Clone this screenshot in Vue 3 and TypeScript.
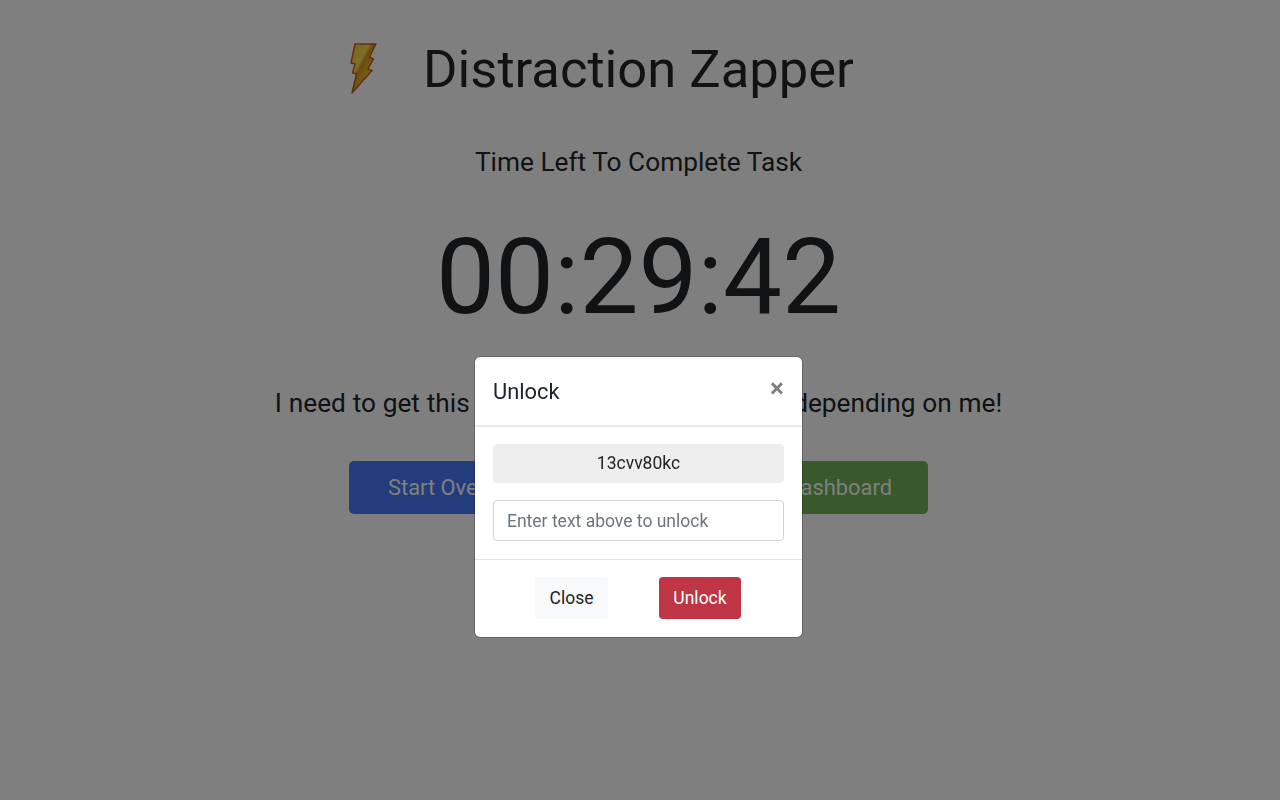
<script setup lang="ts">
const title = 'Distraction Zapper'
const time = '00:29:42'
</script>

<template>
  <div class="page">
    <header class="brand">
      <svg class="bolt" viewBox="0 0 30 54" width="30" height="54" aria-hidden="true">
        <defs>
          <linearGradient id="boltFill" x1="0.1" y1="0.05" x2="0.75" y2="0.75">
            <stop offset="0" stop-color="#f4cc48" />
            <stop offset="0.42" stop-color="#ffdc50" />
            <stop offset="0.52" stop-color="#d8961c" />
            <stop offset="0.75" stop-color="#e8b028" />
            <stop offset="1" stop-color="#ffd040" />
          </linearGradient>
        </defs>
        <path
          d="M6 1 L27 1 L20.5 14 L24.5 16 L19 26 L23 27.5 L3 50 L7.5 31 L3.5 30 L6 21 L2 20 Z"
          fill="url(#boltFill)"
          stroke="#c8601c"
          stroke-width="1.5"
          stroke-linejoin="round"
        />
      </svg>
      <h1 class="title">{{ title }}</h1>
      <span></span>
    </header>
    <p class="subtitle">Time Left To Complete Task</p>
    <div class="timer">{{ time }}</div>
    <p class="goal">I need to get this report finished, my team is depending on me!</p>
    <div class="actions">
      <button class="btn-lg blue">Start Over</button>
      <button class="btn-lg green">Back To Dashboard</button>
    </div>
  </div>

  <div class="backdrop">
    <div class="modal">
      <div class="modal-header">
        <h5 class="modal-title">Unlock</h5>
        <span class="close">×</span>
      </div>
      <div class="modal-body">
        <div class="code">13cvv80kc</div>
        <input class="field" type="text" placeholder="Enter text above to unlock" />
      </div>
      <div class="modal-footer">
        <button class="btn light">Close</button>
        <button class="btn danger">Unlock</button>
      </div>
    </div>
  </div>
</template>

<style>
html, body { margin: 0; background: #fff; }
</style>

<style scoped>
.page {
  box-sizing: border-box;
  width: 1277px;
  height: 800px;
  padding-top: 36px;
  font-family: Roboto, sans-serif;
  color: #212529;
  text-align: center;
}
.brand {
  display: grid;
  grid-template-columns: 1fr auto 1fr;
  align-items: center;
}
.bolt { justify-self: end; margin-right: 44px; }
.title { margin: 0; font-size: 52.5px; font-weight: 400; line-height: 67px; }
.subtitle { margin: 40px 0 0; font-size: 26.25px; line-height: 38px; }
.timer { margin-top: 22px; font-size: 105px; font-weight: 400; line-height: 150px; }
.goal { margin: 32px 0 0; font-size: 26.25px; line-height: 36px; word-spacing: 0.25px; }
.actions {
  display: flex;
  justify-content: space-between;
  width: 579px;
  margin: 40px auto 0;
}
.btn-lg {
  height: 53px;
  padding: 0 36px;
  border: 0;
  border-radius: 5px;
  font: 400 21.875px Roboto, sans-serif;
  color: #fff;
}
.blue { background: #4878f8; padding: 0 39px; }
.green { background: #6eb256; }

.backdrop {
  position: fixed;
  inset: 0;
  background: rgba(0, 0, 0, 0.5);
}
.modal {
  position: absolute;
  left: 474px;
  top: 356px;
  box-sizing: border-box;
  width: 329px;
  height: 282px;
  display: flex;
  flex-direction: column;
  background: #fff;
  background-clip: padding-box;
  border: 1px solid rgba(0, 0, 0, 0.2);
  border-radius: 6px;
  font-family: Roboto, sans-serif;
  color: #212529;
}
.modal-header {
  display: flex;
  justify-content: space-between;
  box-sizing: border-box;
  height: 70px;
  padding: 17px 18px 0;
  border-bottom: 2px solid #e9ecef;
}
.modal-title { margin: 0; font-size: 21.875px; font-weight: 400; line-height: 36px; }
.close { font-size: 26.25px; font-weight: 700; line-height: 28px; color: #808080; }
.modal-body {
  display: flex;
  flex-direction: column;
  gap: 17px;
  padding: 17px 18px;
  height: 132px;
  box-sizing: border-box;
}
.code {
  height: 39px;
  line-height: 39px;
  background: #eee;
  border-radius: 4px;
  text-align: center;
  font-size: 17.5px;
}
.field {
  box-sizing: border-box;
  height: 41px;
  width: 100%;
  padding: 0 13px;
  border: 1px solid #ced4da;
  border-radius: 4px;
  font: 400 17.5px/1.5 Roboto, sans-serif;
  color: #495057;
  outline: none;
}
.field::placeholder { color: #6c757d; opacity: 1; }
.modal-footer {
  display: flex;
  justify-content: center;
  gap: 51px;
  padding: 17px 1px 0 0;
  border-top: 1px solid #dee2e6;
}
.btn {
  height: 42px;
  padding: 0;
  border: 0;
  border-radius: 4px;
  font: 400 17.5px Roboto, sans-serif;
}
.light { background: #f8f9fa; color: #212529; width: 73px; }
.danger { background: #bf3545; color: #fff; width: 82px; }
</style>
